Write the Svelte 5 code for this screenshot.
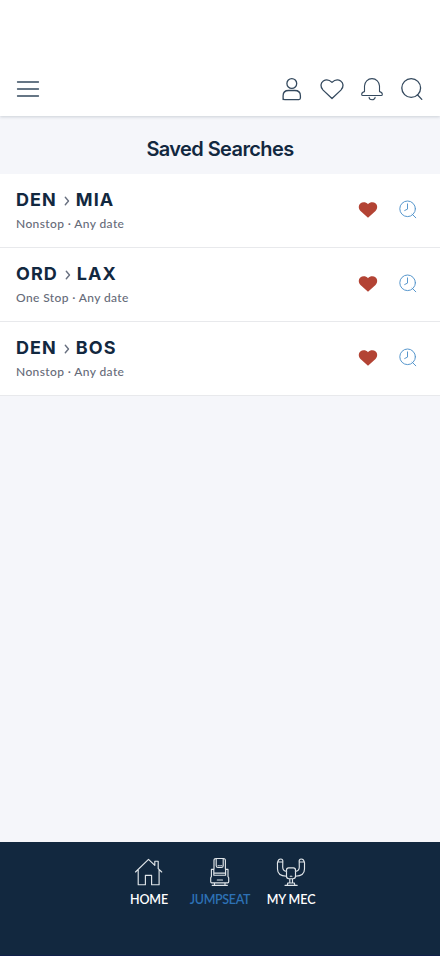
<script>
  const searches = [
    { from: 'DEN', to: 'MIA', detail: 'Nonstop · Any date' },
    { from: 'ORD', to: 'LAX', detail: 'One Stop · Any date' },
    { from: 'DEN', to: 'BOS', detail: 'Nonstop · Any date' }
  ];
</script>

<div class="screen">
  <header>
    <button class="menu" aria-label="Menu">
      <svg width="24" height="24" viewBox="0 0 24 24"><path d="M1.5 5h21M1.5 12h21M1.5 19h21" /></svg>
    </button>
    <div class="actions">
      <button aria-label="Profile">
        <svg width="24" height="24" viewBox="0 0 24 24"><circle cx="11.8" cy="6.5" r="4.9" /><path d="M3.1 22.6v-3.9c0-3.4 2.4-5.2 5.5-5.2h6.2c3.1 0 5.6 1.8 5.6 5.2v2.4c0 1-.5 1.5-1.5 1.5H4.5c-1 0-1.4-.5-1.4-1.5z" /></svg>
      </button>
      <button aria-label="Favorites">
        <svg width="24" height="24" viewBox="0 0 24 24"><path d="M12 21.5 3.1 13.1C-.1 9.9.6 5.9 3.3 4 6.3 2 9.2 2.6 12 5.4c2.8-2.8 5.7-3.4 8.7-1.4 2.7 1.9 3.4 5.9.2 9.1z" /></svg>
      </button>
      <button aria-label="Notifications">
        <svg class="thin" width="24" height="24" viewBox="0 0 24 24"><path d="M4.5 14.6V9.1a7.5 7.5 0 0 1 15 0v5.5c1 .2 2.8 1.1 2.8 2.8 0 .7-.4 1.1-1.1 1.1H2.8c-.7 0-1.1-.4-1.1-1.1 0-1.7 1.8-2.6 2.8-2.8zM9.1 20.2a3 2.5 0 0 0 6 0" /></svg>
      </button>
      <button aria-label="Search">
        <svg width="24" height="24" viewBox="0 0 24 24"><circle cx="11.2" cy="11" r="9.4" /><path d="m17.4 17.8 4.4 4.6" /></svg>
      </button>
    </div>
  </header>

  <main>
    <h1>Saved Searches</h1>
    <ul>
      {#each searches as s}
        <li>
          <div class="info">
            <div class="route"><span>{s.from}</span><svg class="chevron" width="6" height="12" viewBox="0 0 6 12"><path d="m1.3 2.3 3.2 3.7-3.2 3.7" /></svg><span>{s.to}</span></div>
            <div class="detail">{s.detail}</div>
          </div>
          <div class="row-actions">
            <svg class="fav" width="20" height="20" viewBox="0 0 20 20"><path d="M10 17.8 2.5 11C.2 8.8.4 5.4 2.3 3.6c2.3-2 5.7-1.5 7.7.6 2-2.1 5.4-2.6 7.7-.6 1.9 1.8 2.1 5.2-.2 7.4z" /></svg>
            <svg class="history" width="20" height="20" viewBox="0 0 20 20"><circle cx="9.6" cy="8.8" r="7.8" /><path d="M9.5 3.9v5.2L6.7 10.5M14.1 14.1l3.7 3.7" /></svg>
          </div>
        </li>
      {/each}
    </ul>
  </main>

  <nav>
    <a href="#home">
      <svg width="30" height="30" viewBox="0 0 30 30"><path d="M1.5 15 14.5 2.3l6.3 6.1V4.2h3.4v7.4l3.5 3.4M4.2 13v14.7h7.2v-9.4h6.2v9.4h7.5V13" /></svg>
      <span>HOME</span>
    </a>
    <a href="#jumpseat" class="active">
      <svg width="30" height="30" viewBox="0 0 30 30"><path d="M9 12V3.5c0-1.4.7-2 2-2h7.4c1.3 0 2 .6 2 2V12M11.2 2v6.7c0 1.2.7 1.8 1.8 1.8h3.4c1.1 0 1.8-.6 1.8-1.8V2M13 8.7h.8m1 0h.4m1 0h.6M8.8 12v4.1h11.8V12M8.8 18.2h11.8M8.8 12.4H6.4v7.2l-.7 1.1v4.1c0 .7.4 1 1 1h16c.6 0 1-.3 1-1v-4.1l-.7-1.1v-7.2h-2.4M12.3 23h5.2M9.5 26v2.2M20 26v2.2M7.2 28.3h15.2M8.8 16v2.2m11.8-2.2v2.2" /></svg>
      <span>JUMPSEAT</span>
    </a>
    <a href="#mymec">
      <svg width="30" height="30" viewBox="0 0 30 30"><path d="M10.4 19.2C5 19 1.5 16.7 1.5 12V8c0-1.3-.3-1.8.2-3 .4-1.9 1.6-3 3-3 1.7 0 2.4 1.4 2.1 3l-.1 5.1c0 2.9 1.3 4.2 4 4.2M1.8 5h5M19.6 19.2c5.4-.2 8.9-2.5 8.9-7.2V8c0-1.3.3-1.8-.2-3-.4-1.9-1.6-3-3-3-1.7 0-2.4 1.4-2.1 3l.1 5.1c0 2.9-1.3 4.2-4 4.2M23.2 5h5M10.5 13.2c0-1.4.8-2.3 2.1-2.3h4.8c1.3 0 2.1.9 2.1 2.3v6.1c0 1.6-.9 2.4-2.4 2.4h-4.2c-1.5 0-2.4-.8-2.4-2.4zM14.2 19.2h1.7M13.8 22v4m2.7 0v-4M11.2 28.3l.6-2.3h6.5l.6 2.3M9 28.3h12.2" /></svg>
      <span>MY MEC</span>
    </a>
  </nav>
</div>

<style>
  :global(body) { margin: 0; }
  .screen { height: 956px; display: flex; flex-direction: column; background: #f5f6fa; color: #12283f; font-family: Inter, sans-serif; }
  header { height: 116px; box-sizing: border-box; padding: 62px 8px 0; display: flex; justify-content: space-between; align-items: flex-start; background: #fff; box-shadow: 0 1px 3px rgba(18, 40, 63, .18); }
  .actions { display: flex; }
  button { width: 40px; height: 54px; padding: 0; border: 0; background: none; display: grid; place-items: center; }
  svg { display: block; fill: none; stroke: #34495e; stroke-width: 1.3; stroke-linejoin: round; stroke-linecap: round; }
  header .thin { stroke-width: 1.1; }
  main { flex: 1; }
  h1 { margin: 0; height: 58px; padding-top: 5px; box-sizing: border-box; font-size: 20px; line-height: 56px; font-weight: 600; letter-spacing: -.6px; text-align: center; }
  ul { list-style: none; margin: 0; padding: 0; }
  li { height: 74px; box-sizing: border-box; padding: 0 22px 0 16px; display: flex; justify-content: space-between; background: #fff; border-bottom: 1px solid #e8e9ec; }
  .info { padding-top: 13px; }
  .route { display: flex; align-items: center; height: 24px; font-size: 18px; font-weight: 700; letter-spacing: 1.05px; }
  .chevron { margin: 3px 6px 0 7px; stroke: #687080; stroke-width: 1.4; }
  .detail { margin-top: 4px; font: 500 12px/18px Lato, sans-serif; letter-spacing: .38px; color: #666b79; }
  .row-actions { display: flex; gap: 20px; padding-top: 26px; }
  .fav { fill: #b34334; stroke: none; }
  .history { stroke: #5797cd; stroke-width: 1; }
  nav { height: 114px; box-sizing: border-box; padding-top: 15px; display: flex; justify-content: center; background: #12283f; border-bottom: 1px solid #10204a; }
  a { width: 71px; display: flex; flex-direction: column; align-items: center; text-decoration: none; color: #fff; font: 600 12.5px/18px Lato, sans-serif; letter-spacing: -.1px; }
  nav svg { stroke: #e0e5e9; stroke-width: 1.15; }
  a span { margin-top: 4px; white-space: nowrap; }
  .active { color: #2d71b5; letter-spacing: -.35px; }
</style>
